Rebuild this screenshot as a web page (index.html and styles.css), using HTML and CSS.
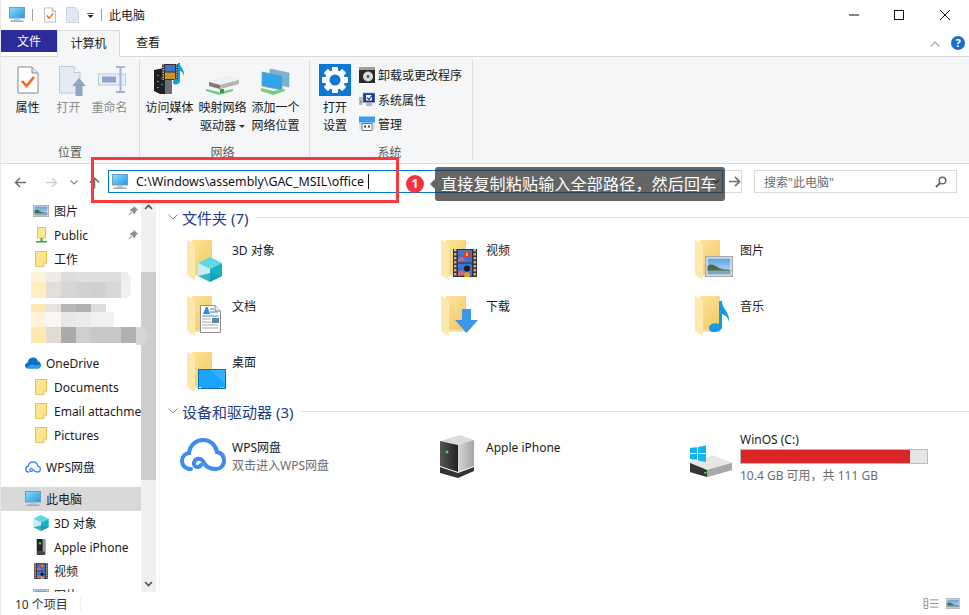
FILE: index.html
```html
<!DOCTYPE html>
<html>
<head>
	<title>此电脑</title>
	<meta charset="utf-8">
	<link rel="stylesheet" href="styles.css">
</head>
<body>
<svg class="defs" xmlns="http://www.w3.org/2000/svg">
	<defs>
		<linearGradient id="screen" x1="0" y1="0" x2="1" y2="1"><stop offset="0" stop-color="#8fe0fb"/><stop offset="1" stop-color="#1d97e2"/></linearGradient>
		<linearGradient id="fold" x1="0" y1="0" x2="0.7" y2="1"><stop offset="0" stop-color="#fbe39a"/><stop offset="1" stop-color="#f5cb68"/></linearGradient>
		<linearGradient id="sky" x1="0" y1="0" x2="0" y2="1"><stop offset="0" stop-color="#5d9fe0"/><stop offset="1" stop-color="#cfe4ef"/></linearGradient>
		<linearGradient id="towerL" x1="0" y1="0" x2="1" y2="0"><stop offset="0" stop-color="#555"/><stop offset="1" stop-color="#222"/></linearGradient>
		<linearGradient id="towerR" x1="0" y1="0" x2="1" y2="0"><stop offset="0" stop-color="#d5d5d5"/><stop offset="1" stop-color="#a5a5a5"/></linearGradient>

		<symbol id="i-pc" viewBox="0 0 16 16">
			<rect x="0.5" y="0.5" width="15" height="10.5" fill="url(#screen)" stroke="#6f9dbd"/>
			<rect x="5" y="11.5" width="6" height="2" fill="#b9c6d2"/>
			<rect x="1.5" y="13.5" width="13" height="1.4" fill="#8ea5b8"/>
		</symbol>
		<symbol id="i-prop" viewBox="0 0 22 28">
			<path d="M1 1H15L21 7V27H1Z" fill="#fff" stroke="#8a8a8a"/>
			<path d="M15 1V7H21" fill="#e6e6e6" stroke="#8a8a8a"/>
			<path d="M5 15L9.5 20L17 11" fill="none" stroke="#f1641e" stroke-width="2.6"/>
		</symbol>
		<symbol id="i-blank" viewBox="0 0 13 16">
			<path d="M0.5 0.5H9L12.5 4V15.5H0.5Z" fill="#dfe7f3" stroke="#c9d5e6"/>
		</symbol>
		<symbol id="i-open" viewBox="0 0 27 30">
			<path d="M0.5 0.5H15L21 6.5V27H0.5Z" fill="#e3ebf6" stroke="#bccbdd"/>
			<path d="M15 0.5V6.5H21" fill="#f2f5fa" stroke="#bccbdd"/>
			<path d="M20 12L27 20H23.5V30H16.5V20H13Z" fill="#8ea6c2"/>
		</symbol>
		<symbol id="i-rename" viewBox="0 0 28 27">
			<rect x="0.5" y="8" width="27" height="11" fill="#e9eff7" stroke="#bccbdd"/>
			<rect x="4" y="10.5" width="14" height="6" fill="#8fa7c6"/>
			<path d="M18 1H27M22.5 1V26M18 26H27" fill="none" stroke="#a3b6cc" stroke-width="2"/>
		</symbol>
		<symbol id="i-media" viewBox="0 0 31 31">
			<path d="M0 7L10 5L18 8V31H6L0 28Z" fill="#1f1f1f"/>
			<path d="M11 9L18 8V31H11Z" fill="#6f6f6f"/>
			<path d="M3 12h2v1H3zM7 15h2v1H7zM3 18h2v1H3zM7 21h2v1H7zM3 24h2v1H3z" fill="#2a9df4"/>
			<rect x="8" y="1" width="16" height="16" fill="#333"/>
			<path d="M9.2 1V17M22.800 1V17" stroke="#c2b58f" stroke-width="1.400" stroke-dasharray="1.500 1"/>
			<rect x="11" y="2" width="10" height="6.500" fill="#3e72c8"/>
			<rect x="11" y="9.500" width="10" height="6.500" fill="#c8952a"/>
			<path d="M24 0H26C26 5 31 6 30 13C29 9 27 8 26 8V18C26 22 19 23 19 19C19 16 22 15 24 16Z" fill="#159ae6"/>
		</symbol>
		<symbol id="i-drive" viewBox="0 0 33 21">
			<path d="M3 8L21 2L33 6V10L14 15L3 12Z" fill="#dcdcdc"/>
			<path d="M3 8L14 11L33 6L21 2Z" fill="#f0f0f0"/>
			<path d="M14 11L33 6V10L14 15Z" fill="#b5b5b5"/>
			<path d="M3 8L14 11V15L3 12Z" fill="#7c7c7c"/>
			<path d="M0 15L13 18L27 15V17L13 21L0 17Z" fill="#7bcb7b"/>
			<rect x="14" y="15" width="4" height="4" fill="#2f9d3f"/>
		</symbol>
		<symbol id="i-net" viewBox="0 0 29 26">
			<path d="M9 0L28 4V18L9 14Z" fill="#78b4d6" stroke="#8a9ba8" stroke-width="0.6"/>
			<path d="M1 3L21 7V21L1 17Z" fill="#2ea5ea" stroke="#8a9ba8" stroke-width="0.8"/>
			<path d="M0 19L12 22L24 20V22L12 26L0 22Z" fill="#7bcb7b"/>
		</symbol>
		<symbol id="i-gear" viewBox="0 0 32 32">
			<rect width="32" height="32" fill="#0f78d4"/>
			<g fill="#fff">
				<rect x="13" y="3" width="6" height="26" rx="1"/>
				<rect x="13" y="3" width="6" height="26" rx="1" transform="rotate(45 16 16)"/>
				<rect x="13" y="3" width="6" height="26" rx="1" transform="rotate(90 16 16)"/>
				<rect x="13" y="3" width="6" height="26" rx="1" transform="rotate(135 16 16)"/>
				<circle cx="16" cy="16" r="10"/>
			</g>
			<circle cx="16" cy="16" r="5.5" fill="#0f78d4"/>
		</symbol>
		<symbol id="i-uninstall" viewBox="0 0 16 16">
			<rect y="0" width="16" height="4" fill="#9aa87a"/>
			<rect y="3" width="16" height="13" fill="#2a2a2a"/>
			<circle cx="9" cy="9.5" r="5" fill="#d8d8d8"/>
			<circle cx="9" cy="9.5" r="1.4" fill="#555"/>
		</symbol>
		<symbol id="i-sys" viewBox="0 0 16 14">
			<rect x="0" y="4" width="3.5" height="8" fill="#b9b9b9"/>
			<rect x="1" y="8" width="1.5" height="1.5" fill="#3fae49"/>
			<rect x="4" y="0" width="12" height="9.5" fill="#1632a8" stroke="#9aa5b5" stroke-width="0.8"/>
			<rect x="7" y="2" width="6" height="5.5" fill="#fff"/>
			<path d="M8 4.5L10 6.5L13 2.5" fill="none" stroke="#1632a8" stroke-width="1.2"/>
			<rect x="7" y="10" width="6" height="3" fill="#b9b9b9"/>
		</symbol>
		<symbol id="i-manage" viewBox="0 0 16 15">
			<rect y="0" width="16" height="7" fill="#3a9be8"/>
			<rect x="0" y="6" width="16" height="7" fill="#cfe6f7"/>
			<path d="M3 14V7H13V14Z" fill="#fff" stroke="#555" stroke-width="0.8"/>
			<rect x="5" y="9" width="2" height="2" fill="#444"/>
			<rect x="9" y="9" width="2" height="2" fill="#444"/>
		</symbol>

		<symbol id="i-fold-sm" viewBox="0 0 12 16">
			<path d="M0.5 0.5H11.5V12L8.5 15.5H0.5Z" fill="#fde58f" stroke="#e8c24c"/>
			<path d="M8.5 15.5V12H11.5" fill="#fff" stroke="#e8c24c"/>
		</symbol>
		<symbol id="i-fold-pub" viewBox="0 0 12 16">
			<path d="M2.5 0.5H10.5V11H2.5Z" fill="#fde58f" stroke="#e8c24c"/>
			<rect x="5.5" y="11" width="2" height="3" fill="#3aa83a"/>
			<rect x="1" y="14" width="11" height="1.6" fill="#3aa83a"/>
		</symbol>
		<symbol id="i-pin" viewBox="0 0 10 10">
			<path d="M6 0L10 4L8.6 4.6L6.8 7.4L6.6 8.6L1.6 3.4L2.8 3.2L5.4 1.4ZM3 6L0 10L4 7Z" fill="#8a8f96"/>
		</symbol>
		<symbol id="i-folder" viewBox="0 0 48 48">
			<rect x="11" y="3" width="20" height="34" fill="url(#fold)"/>
			<path d="M6 3L14 7V43L6 38Z" fill="#fde9ad"/>
			<path d="M14 37H31V39H14Z" fill="#f1e1b8"/>
		</symbol>
		<symbol id="i-cube" viewBox="0 0 24 25">
			<path d="M12 0L24 6L12 12L0 6Z" fill="#5dd8e4"/>
			<path d="M0 6L12 12V25L0 19Z" fill="#c6eff2"/>
			<path d="M24 6L12 12V25L24 19Z" fill="#16b2c8"/>
			<path d="M0 19L12 16L24 19L12 25Z" fill="#0f9cb4" opacity="0.75"/>
		</symbol>
		<symbol id="i-film" viewBox="0 0 24 28">
			<rect width="24" height="28" fill="#333"/>
			<path d="M2.2 0V28M21.8 0V28" stroke="#c2b58f" stroke-width="2.4" stroke-dasharray="2.4 1.6"/>
			<rect x="5" y="1" width="14" height="12.5" fill="#3e73d6"/>
			<rect x="5" y="14.5" width="14" height="12.5" fill="#3e73d6"/>
			<path d="M5 10L9 8L13 11L5 13ZM5 23L9 21L13 25L5 27Z" fill="#d3647f"/>
			<circle cx="14" cy="5.5" r="3.6" fill="#e13c2d"/>
			<rect x="13" y="4" width="2" height="3" fill="#f5c21c"/>
			<circle cx="14" cy="19.5" r="3" fill="#1b1b1b"/>
			<circle cx="14" cy="26" r="3" fill="#e0a41c"/>
		</symbol>
		<symbol id="i-doc" viewBox="0 0 21 28">
			<path d="M0.5 0.5H15L20.5 6V27.5H0.5Z" fill="#fff" stroke="#8c8c8c"/>
			<path d="M15 0.5V6H20.5" fill="#e8e8e8" stroke="#8c8c8c"/>
			<path d="M3 9L6 2H7.5L10 9Z" fill="#2a8ad6"/>
			<path d="M10 4H14M10 7H18M2 11H18" stroke="#2a8ad6" stroke-width="1"/>
			<path d="M2 14H11M2 17H11M2 20H18M2 23H18" stroke="#a8a8a8" stroke-width="1"/>
			<rect x="12" y="13" width="7" height="5" fill="#5e8a96"/>
		</symbol>
		<symbol id="i-desk" viewBox="0 0 28 20">
			<rect x="0.5" y="0.5" width="27" height="19" fill="#19a4ff" stroke="#0a6eb4"/>
			<path d="M12 1H27V14Z" fill="#49b8ff" opacity="0.6"/>
			<path d="M1 18.5H3M22 18.5H23M24.5 18.5H25.5" stroke="#fff"/>
		</symbol>
		<symbol id="i-down" viewBox="0 0 23 24">
			<path d="M7 0H16V11H23L11.5 24L0 11H7Z" fill="#3a96e6"/>
		</symbol>
		<symbol id="i-pic" viewBox="0 0 28 21">
			<rect x="0.75" y="0.75" width="26.5" height="19.5" fill="#fff" stroke="#a8a8a8" stroke-width="1.5"/>
			<rect x="2.5" y="2.5" width="23" height="16" fill="url(#sky)"/>
			<path d="M2.5 10C6 7 9 9 14 12C18 14 22 13 25.5 14V15H2.5Z" fill="#486b52"/>
			<rect x="2.5" y="14.5" width="23" height="4" fill="#7ea8b8"/>
		</symbol>
		<symbol id="i-note" viewBox="0 0 22 32">
			<path d="M11 0H14C14 8 22 11 21 21C20 16 17 14 14 13V26C14 31 1 34 1 27C1 23 7 21 11 23Z" fill="#159ae6"/>
		</symbol>
		<symbol id="i-cloud" viewBox="0 0 46 33">
			<path d="M11 31C5 31 2 27 2 23C2 18 6 15 9 15C10 7 16 2 23 2C31 2 36 8 37 14C42 15 44 19 44 23C44 28 40 31 36 31C29 31 26 29 24 25C23 22 20 20 17 21C14 22 13 26 15 28C17 30 20 29 21 27" fill="none" stroke="#3d8cf0" stroke-width="4" stroke-linecap="round"/>
		</symbol>
		<symbol id="i-cloud-blue" viewBox="0 0 16 11">
			<path d="M3 11C1 11 0 9.5 0 8C0 6.5 1 5.4 2.4 5.4C3 2.200 5.200 0 8.200 0C10.500 0 12.300 1.600 12.800 3.800C14.600 4.100 16 5.600 16 7.600C16 9.600 14.500 11 12.800 11Z" fill="#0f6fc6"/>
			<path d="M2 10.500C5 5.500 8 7 10 8L16 7C15.800 9.800 14 11 12.800 11H3Z" fill="#2f9bea"/>
		</symbol>
		<symbol id="i-phone" viewBox="0 0 34 43">
			<path d="M0 6L20 0L34 5L18 10Z" fill="#dcdcdc"/>
			<path d="M0 6L18 10V37L0 31Z" fill="url(#towerL)"/>
			<path d="M18 10L34 5V31L18 37Z" fill="url(#towerR)"/>
			<path d="M0 32L18 38L34 32V36L18 43L0 38Z" fill="#333"/>
			<circle cx="7" cy="17" r="1.500" fill="#3fe04a"/>
		</symbol>
		<symbol id="i-phone-sm" viewBox="0 0 8 15">
			<rect x="0" y="0" width="8" height="12" fill="#222"/>
			<rect x="5.500" y="0" width="2.500" height="12" fill="#999"/>
			<rect x="0" y="12" width="8" height="3" fill="#444"/>
			<rect x="2" y="3" width="2" height="2" fill="#3fe04a"/>
		</symbol>
		<symbol id="i-win" viewBox="0 0 44 33">
			<path d="M0 18L23 11L42 18V25L17 32L0 27Z" fill="#bbb"/>
			<path d="M0 18L23 11L42 18L17 25Z" fill="#e6e6e6"/>
			<path d="M17 25L42 18V25L17 32Z" fill="#a8a8a8"/>
			<path d="M0 18L17 25V32L0 27Z" fill="#343434"/>
			<rect x="14" y="27" width="2.500" height="1.500" fill="#3fe04a"/>
			<path d="M0 3L7 2V8H0ZM8 2L16 0.500V8H8ZM0 9H7V15L0 14ZM8 9H16V17L8 15.500Z" fill="#12b5ef"/>
		</symbol>
	</defs>
</svg>

<div class="window">
	<!-- title bar -->
	<div class="titlebar">
		<svg class="qat-pc"><use href="#i-pc"/></svg>
		<span class="qat-sep"></span>
		<svg class="qat-doc"><use href="#i-prop"/></svg>
		<svg class="qat-doc2"><use href="#i-blank"/></svg>
		<svg class="qat-drop" viewBox="0 0 8 6"><path d="M0 0H8V1H0ZM0.500 2.500H7.500L4 6Z" fill="#222"/></svg>
		<span class="qat-sep"></span>
		<span class="title">此电脑</span>
		<div class="winbtns">
			<svg viewBox="0 0 10 10"><path d="M0 5H10" stroke="#111"/></svg>
			<svg viewBox="0 0 10 10"><rect x="0.500" y="0.500" width="9" height="9" fill="none" stroke="#111"/></svg>
			<svg viewBox="0 0 10 10"><path d="M0 0L10 10M10 0L0 10" stroke="#111"/></svg>
		</div>
	</div>

	<!-- tabs -->
	<div class="tabs">
		<span class="tab tab-file">文件</span>
		<span class="tab tab-on">计算机</span>
		<span class="tab">查看</span>
		<svg class="collapse" viewBox="0 0 10 6"><path d="M0.500 5.500L5 1L9.500 5.500" fill="none" stroke="#a8a8a8" stroke-width="1.200"/></svg>
		<span class="help">?</span>
	</div>

	<!-- ribbon -->
	<div class="ribbon">
		<div class="group group-loc">
			<div class="group-items">
				<div class="rbtn"><div class="rb-icon"><svg class="s-prop"><use href="#i-prop"/></svg></div><span>属性</span></div>
				<div class="rbtn off"><div class="rb-icon"><svg class="s-open"><use href="#i-open"/></svg></div><span>打开</span></div>
				<div class="rbtn off"><div class="rb-icon"><svg class="s-rename"><use href="#i-rename"/></svg></div><span>重命名</span></div>
			</div>
			<div class="group-name">位置</div>
		</div>
		<div class="group group-net">
			<div class="group-items">
				<div class="rbtn wide"><div class="rb-icon"><svg class="s-media"><use href="#i-media"/></svg></div><span>访问媒体</span><i class="tri"></i></div>
				<div class="rbtn wide"><div class="rb-icon"><svg class="s-drive"><use href="#i-drive"/></svg></div><span>映射网络</span><span>驱动器 <i class="tri tri-in"></i></span></div>
				<div class="rbtn wide"><div class="rb-icon"><svg class="s-net"><use href="#i-net"/></svg></div><span>添加一个</span><span>网络位置</span></div>
			</div>
			<div class="group-name">网络</div>
		</div>
		<div class="group group-sys">
			<div class="group-items">
				<div class="rbtn narrow"><div class="rb-icon"><svg class="s-gear"><use href="#i-gear"/></svg></div><span>打开</span><span>设置</span></div>
				<div class="small-list">
					<div class="small"><svg><use href="#i-uninstall"/></svg>卸载或更改程序</div>
					<div class="small"><svg><use href="#i-sys"/></svg>系统属性</div>
					<div class="small"><svg><use href="#i-manage"/></svg>管理</div>
				</div>
			</div>
			<div class="group-name">系统</div>
		</div>
	</div>

	<!-- address bar -->
	<div class="navbar">
		<svg class="nav-ic" viewBox="0 0 14 12"><path d="M13 6H2M6.500 1L1.500 6L6.500 11" fill="none" stroke="#6d6d6d" stroke-width="1.600"/></svg>
		<svg class="nav-ic nav-fwd" viewBox="0 0 14 12"><path d="M1 6H12M7.500 1L12.500 6L7.500 11" fill="none" stroke="#d0d0d0" stroke-width="1.600"/></svg>
		<svg class="nav-drop" viewBox="0 0 8 5"><path d="M0.500 0.500L4 4L7.500 0.500" fill="none" stroke="#8a8a8a" stroke-width="1.200"/></svg>
		<svg class="nav-up" viewBox="0 0 12 13"><path d="M6 13V2M1 6.500L6 1.500L11 6.500" fill="none" stroke="#6d6d6d" stroke-width="1.600"/></svg>
		<div class="addr">
			<div class="addr-input">
				<svg><use href="#i-pc"/></svg>
				<span class="addr-text">C:\Windows\assembly\GAC_MSIL\office</span>
				<span class="caret"></span>
				<svg class="addr-drop" viewBox="0 0 8 5"><path d="M0.500 0.500L4 4L7.500 0.500" fill="none" stroke="#333" stroke-width="1.200"/></svg>
			</div>
			<svg class="addr-go" viewBox="0 0 14 12"><path d="M1 6H12M7.500 1L12.500 6L7.500 11" fill="none" stroke="#6d6d6d" stroke-width="1.700"/></svg>
		</div>
		<div class="search">
			<span>搜索"此电脑"</span>
			<svg viewBox="0 0 12 12"><circle cx="7.500" cy="4.500" r="3.300" fill="none" stroke="#666" stroke-width="1.500"/><path d="M5 7L1 11" stroke="#666" stroke-width="2"/></svg>
		</div>
	</div>

	<div class="main">
		<!-- left tree -->
		<div class="side">
			<div class="tree">
				<div class="row sub"><svg class="ic"><use href="#i-pic"/></svg><span>图片</span><svg class="pin"><use href="#i-pin"/></svg></div>
				<div class="row sub"><svg class="ic"><use href="#i-fold-pub"/></svg><span>Public</span><svg class="pin"><use href="#i-pin"/></svg></div>
				<div class="row sub"><svg class="ic"><use href="#i-fold-sm"/></svg><span>工作</span></div>
				<div class="row"></div>
				<div class="row"></div>
				<div class="row"></div>
				<div class="row top gap"><svg class="ic"><use href="#i-cloud-blue"/></svg><span>OneDrive</span></div>
				<div class="row sub"><svg class="ic"><use href="#i-fold-sm"/></svg><span>Documents</span></div>
				<div class="row sub"><svg class="ic"><use href="#i-fold-sm"/></svg><span>Email attachments</span></div>
				<div class="row sub"><svg class="ic"><use href="#i-fold-sm"/></svg><span>Pictures</span></div>
				<div class="row top gap"><svg class="ic"><use href="#i-cloud"/></svg><span>WPS网盘</span></div>
				<div class="row top gap sel"><svg class="ic"><use href="#i-pc"/></svg><span>此电脑</span></div>
				<div class="row sub"><svg class="ic"><use href="#i-cube"/></svg><span>3D 对象</span></div>
				<div class="row sub"><svg class="ic"><use href="#i-phone-sm"/></svg><span>Apple iPhone</span></div>
				<div class="row sub"><svg class="ic"><use href="#i-film"/></svg><span>视频</span></div>
				<div class="row sub"><svg class="ic"><use href="#i-pic"/></svg><span>图片</span></div>
			</div>
			<div class="scroll">
				<svg class="sc-arrow" viewBox="0 0 9 6"><path d="M1 5L4.500 1.500L8 5" fill="none" stroke="#555" stroke-width="1.700"/></svg>
				<div class="sc-thumb"></div>
				<svg class="sc-arrow sc-end" viewBox="0 0 9 6"><path d="M1 1L4.500 4.500L8 1" fill="none" stroke="#555" stroke-width="1.700"/></svg>
			</div>
		</div>

		<!-- content -->
		<div class="content">
			<div class="sec-head">
				<svg viewBox="0 0 10 6"><path d="M0.500 0.500L5 5L9.500 0.500" fill="none" stroke="#8a8a8a"/></svg>
				<span>文件夹 (7)</span><i></i>
			</div>
			<div class="grid">
				<div class="item"><div class="big"><svg><use href="#i-folder"/></svg><svg class="ov ov-cube"><use href="#i-cube"/></svg></div><div class="name">3D 对象</div></div>
				<div class="item"><div class="big"><svg><use href="#i-folder"/></svg><svg class="ov ov-film"><use href="#i-film"/></svg></div><div class="name">视频</div></div>
				<div class="item"><div class="big"><svg><use href="#i-folder"/></svg><svg class="ov ov-pic"><use href="#i-pic"/></svg></div><div class="name">图片</div></div>
				<div class="item"><div class="big"><svg><use href="#i-folder"/></svg><svg class="ov ov-doc"><use href="#i-doc"/></svg></div><div class="name">文档</div></div>
				<div class="item"><div class="big"><svg><use href="#i-folder"/></svg><svg class="ov ov-down"><use href="#i-down"/></svg></div><div class="name">下载</div></div>
				<div class="item"><div class="big"><svg><use href="#i-folder"/></svg><svg class="ov ov-note"><use href="#i-note"/></svg></div><div class="name">音乐</div></div>
				<div class="item"><div class="big"><svg><use href="#i-folder"/></svg><svg class="ov ov-desk"><use href="#i-desk"/></svg></div><div class="name">桌面</div></div>
			</div>

			<div class="sec-head sec-two">
				<svg viewBox="0 0 10 6"><path d="M0.500 0.500L5 5L9.500 0.500" fill="none" stroke="#8a8a8a"/></svg>
				<span>设备和驱动器 (3)</span><i></i>
			</div>
			<div class="devices">
				<div class="dev">
					<svg class="dev-cloud"><use href="#i-cloud"/></svg>
					<div class="dev-txt"><div>WPS网盘</div><div class="muted">双击进入WPS网盘</div></div>
				</div>
				<div class="dev">
					<svg class="dev-phone"><use href="#i-phone"/></svg>
					<div class="dev-txt"><div>Apple iPhone</div></div>
				</div>
				<div class="dev">
					<svg class="dev-win"><use href="#i-win"/></svg>
					<div class="dev-txt dev-disk">
						<div>WinOS (C:)</div>
						<div class="bar"><div class="bar-fill" style="width:91%"></div></div>
						<div class="muted">10.4 GB 可用，共 111 GB</div>
					</div>
				</div>
			</div>
		</div>
	</div>

	<!-- status bar -->
	<div class="status">
		<span>10 个项目</span><i></i>
		<div class="views">
			<svg class="view-list" viewBox="0 0 16 12"><path d="M0.500 0.500H4.500V11.500H0.500ZM0.500 4H4.500M0.500 8H4.500" fill="none" stroke="#8a8a8a"/><path d="M7 2H16M7 6H16M7 10H16" stroke="#8a8a8a"/></svg>
			<svg class="view-pic"><use href="#i-pic"/></svg>
		</div>
	</div>

	<!-- mosaic over the hidden rows -->
	<svg class="mosaic" viewBox="0 0 118 74">
		<path d="M0 0H15V10H0Z" fill="#fdf3d8"/><path d="M15 0H30V10H15Z" fill="#ecebe8"/><path d="M30 0H45V10H30Z" fill="#dcdcdc"/><path d="M45 0H90V10H45Z" fill="#dedede"/><path d="M90 0H96L100 5V10H90Z" fill="#eeeef0"/>
		<path d="M0 10H15V26H0Z" fill="#fdeec0"/><path d="M15 10H30V26H15Z" fill="#e2dfd8"/><path d="M30 10H45V26H30Z" fill="#d6d6d6"/><path d="M45 10H60V26H45Z" fill="#d2d2d2"/><path d="M60 10H75V26H60Z" fill="#d0d0d4"/><path d="M75 10H90V26H75Z" fill="#d8d8d8"/><path d="M90 10H100V22L96 26H90Z" fill="#f0f0f2"/>
		<path d="M0 32H15V40H0Z" fill="#fde9b0"/><path d="M15 32H30V40H15Z" fill="#e6e3dc"/><path d="M30 32H45V40H30Z" fill="#b8b8ba"/><path d="M45 32H60V40H45Z" fill="#b0b0b4"/><path d="M60 32H75V40H60Z" fill="#dcdcdc"/>
		<path d="M0 40H15V55H0Z" fill="#fef3d5"/><path d="M15 40H30V55H15Z" fill="#f8f7f4"/><path d="M30 40H45V55H30Z" fill="#e8e8e8"/><path d="M45 40H60V55H45Z" fill="#ebebeb"/><path d="M60 40H83V55H60Z" fill="#f1f1f1"/>
		<path d="M0 55H15V71H0Z" fill="#fde8b0"/><path d="M15 55H30V71H15Z" fill="#e0dccf"/><path d="M30 55H45V71H30Z" fill="#aaaaaa"/><path d="M45 55H60V71H45Z" fill="#cfcfcf"/><path d="M60 55H90V71H60Z" fill="#c8c8c8"/><path d="M90 55H105V71H90Z" fill="#b0b0b2"/><path d="M105 55H113L117 60V68L113 73H105Z" fill="#d5d5d5"/>
	</svg>

	<!-- annotation -->
	<div class="redbox"></div>
	<div class="badge">1</div>
	<div class="callout">直接复制粘贴输入全部路径，然后回车</div>
</div>
</body>
</html>
```

FILE: styles.css
```css
html, body {
    margin: 0;
    padding: 0;
    background: #fff;
}

body {
    font-family: "Noto Sans", "Noto Sans CJK SC", sans-serif;
    font-size: 12px;
    color: #1a1a1a;
}

.defs {
    display: block;
    width: 0;
    height: 0;
    overflow: hidden;
}

svg {
    display: block;
    flex: none;
}

i {
    font-style: normal;
}

.window {
    position: relative;
    width: 969px;
    height: 615px;
    overflow: hidden;
    display: flex;
    flex-direction: column;
    box-sizing: border-box;
    border-left: 1px solid #e8e8e8;
}

/* title bar */
.titlebar {
    height: 30px;
    display: flex;
    align-items: center;
    padding-left: 8px;
}

.qat-pc {
    width: 16px;
    height: 16px;
}

.qat-sep {
    width: 1px;
    height: 12px;
    background: #a0a0a0;
    margin: 0 7px 0 7px;
}

.qat-doc {
    width: 12px;
    height: 16px;
    margin-left: 4px;
}

.qat-doc2 {
    width: 13px;
    height: 16px;
    margin-left: 10px;
}

.qat-drop {
    width: 7px;
    height: 5px;
    margin-left: 8px;
}

.title {
    margin-left: 0;
    font-size: 12px;
}

.winbtns {
    margin-left: auto;
    display: flex;
    gap: 35px;
    padding-right: 19px;
}

.winbtns svg {
    width: 10px;
    height: 10px;
}

.winbtns svg:last-child {
    margin-left: 1px;
}

/* tabs */
.tabs {
    height: 27px;
    display: flex;
    align-items: flex-start;
    border-bottom: 1px solid #dadbdc;
    box-sizing: border-box;
}

.tab {
    height: 26px;
    line-height: 25px;
    width: 56px;
    text-align: center;
    box-sizing: border-box;
}

.tab-file {
    height: 22px;
    line-height: 24px;
    background: #2b2b9a;
    color: #fff;
}

.tab-on {
    width: 63px;
    height: 27px;
    background: #f5f6f7;
    border: 1px solid #dadbdc;
    border-bottom: none;
}

.collapse {
    width: 10px;
    height: 6px;
    margin: 11px 0 0 auto;
}

.help {
    width: 14px;
    height: 14px;
    border-radius: 50%;
    background: #1a6fcc;
    color: #fff;
    font-size: 11px;
    font-weight: 700;
    line-height: 14px;
    text-align: center;
    margin: 6px 4px 0 11px;
}

/* ribbon */
.ribbon {
    height: 107px;
    background: #f5f6f7;
    border-bottom: 1px solid #dadbdc;
    box-sizing: border-box;
    display: flex;
}

.group {
    display: flex;
    flex-direction: column;
    margin-top: 3px;
    margin-bottom: 3px;
    border-right: 1px solid #dcdddf;
    box-sizing: border-box;
}

.group-loc { width: 139px; padding-left: 6px; }
.group-net { width: 170px; padding-left: 3px; }
.group-sys { width: 163px; padding-left: 7px; }

.group-items {
    flex: 1;
    display: flex;
}

.group-name {
    height: 17px;
    line-height: 19px;
    text-align: center;
    color: #5c5c5c;
    margin-left: -6px;
}

.group-net .group-name { margin-left: -7px; }
.group-sys .group-name { margin-left: -10px; }

.rbtn {
    width: 41px;
    display: flex;
    flex-direction: column;
    align-items: center;
    line-height: 17.5px;
    white-space: nowrap;
}

.rbtn.wide { width: 53px; }
.rbtn.narrow { width: 36px; }
.rbtn.off { color: #8d8d8d; }

.rb-icon {
    height: 36px;
    margin-bottom: 3px;
    display: flex;
    align-items: flex-end;
}

.s-prop { width: 22px; height: 28px; margin-bottom: 2px; }
.s-open { width: 27px; height: 30px; margin-left: 8px; }
.s-rename { width: 28px; height: 27px; margin-bottom: 3px; margin-left: 4px; }
.s-media { width: 31px; height: 31px; margin-bottom: 2px; }
.s-drive { width: 33px; height: 21px; margin-bottom: 1px; }
.s-net { width: 29px; height: 26px; margin-bottom: 1px; }
.s-gear { width: 32px; height: 32px; }

.tri {
    display: block;
    width: 0;
    height: 0;
    border-left: 3px solid transparent;
    border-right: 3px solid transparent;
    border-top: 3px solid #333;
    margin-top: 1px;
}

.tri-in {
    display: inline-block;
    vertical-align: middle;
    margin: 0;
}

.small-list {
    margin-left: 6px;
    padding-top: 6px;
    display: flex;
    flex-direction: column;
    gap: 6.5px;
}

.small {
    display: flex;
    align-items: center;
    gap: 3px;
    height: 18px;
    white-space: nowrap;
}

.small svg {
    width: 16px;
    height: 16px;
}

/* address bar */
.navbar {
    height: 35px;
    display: flex;
    align-items: flex-start;
    padding-top: 6px;
    box-sizing: border-box;
}

.nav-ic {
    width: 13px;
    height: 11px;
    margin: 7px 0 0 13px;
}

.nav-fwd {
    margin-left: 18px;
}

.nav-drop {
    width: 8px;
    height: 5px;
    margin: 10px 0 0 12px;
}

.nav-up {
    width: 11px;
    height: 13px;
    margin: 6px 0 0 11px;
}

.addr {
    margin-left: 8px;
    width: 634px;
    height: 23px;
    border: 1px solid #d9d9d9;
    box-sizing: border-box;
    display: flex;
    align-items: center;
}

.addr-input {
    width: 615px;
    height: 23px;
    margin: -1px 0 -1px -1px;
    border: 1px solid #0078d7;
    box-sizing: border-box;
    display: flex;
    align-items: center;
    padding-left: 2px;
}

.addr-input svg {
    width: 18px;
    height: 16px;
}

.addr-text {
    margin-left: 7px;
    white-space: nowrap;
    color: #111;
    font-size: 12.4px;
}

.caret {
    width: 1px;
    height: 15px;
    background: #111;
    margin-left: 4px;
}

.addr-input .addr-drop {
    width: 8px;
    height: 5px;
    margin-left: auto;
    margin-right: 2px;
}

.addr-go {
    width: 13px;
    height: 11px;
    margin-left: 5px;
}

.search {
    margin-left: 12px;
    width: 203px;
    height: 23px;
    border: 1px solid #d9d9d9;
    box-sizing: border-box;
    display: flex;
    align-items: center;
    justify-content: space-between;
    padding: 0 9px;
    color: #6d6d6d;
}

.search svg {
    width: 12px;
    height: 12px;
}

/* sidebar */
.main {
    flex: 1;
    min-height: 0;
    display: flex;
}

.side {
    width: 156px;
    display: flex;
    flex: none;
}

.tree {
    width: 140px;
    overflow: hidden;
    flex: none;
}

.row {
    height: 24px;
    display: flex;
    align-items: center;
    white-space: nowrap;
    overflow: hidden;
}

.row.sub { padding-left: 32px; }
.row.top { padding-left: 24px; }
.row.gap { margin-top: 8px; }
.row.sel { background: #d9d9d9; }

.ic {
    width: 16px;
    height: 16px;
    margin-right: 5px;
}

.pin {
    width: 10px;
    height: 10px;
    margin-left: auto;
    margin-right: 3px;
}

.scroll {
    width: 15px;
    background: #f0f0f0;
    position: relative;
    display: flex;
    flex-direction: column;
    align-items: center;
}

.sc-arrow {
    width: 9px;
    height: 6px;
    margin-top: 5px;
}

.sc-thumb {
    width: 100%;
    height: 208px;
    margin-top: 62px;
    background: #cdcdcd;
}

.sc-end {
    margin-top: auto;
    margin-bottom: 5px;
}

/* content */
.content {
    flex: 1;
    min-width: 0;
    padding-left: 8px;
    margin-left: 2px;
    border-left: 1px solid #f4f4f4;
}

.sec-head {
    height: 16px;
    margin-top: 10px;
    display: flex;
    align-items: center;
    color: #1e3a8c;
    font-size: 15px;
}

.sec-head svg {
    width: 10px;
    height: 6px;
    margin-right: 4px;
}

.sec-head i {
    flex: 1;
    height: 1px;
    background: #e2e2e2;
    margin-left: 8px;
}

.sec-two {
    margin-top: -2px;
}

.grid {
    display: grid;
    grid-template-columns: repeat(3, 254px);
    grid-auto-rows: 56px;
    margin: 12px 0 0 13px;
}

.item {
    display: flex;
}

.big {
    position: relative;
    width: 48px;
    height: 48px;
}

.big > svg {
    width: 48px;
    height: 48px;
}

.big > .ov { position: absolute; }
.big > .ov-cube { left: 17px; top: 20px; width: 24px; height: 25px; }
.big > .ov-film { left: 18px; top: 12px; width: 24px; height: 28px; }
.big > .ov-pic { left: 16px; top: 19px; width: 28px; height: 21px; }
.big > .ov-doc { left: 19px; top: 12px; width: 21px; height: 28px; }
.big > .ov-down { left: 20px; top: 16px; width: 23px; height: 24px; }
.big > .ov-note { left: 19px; top: 8px; width: 22px; height: 32px; }
.big > .ov-desk { left: 17px; top: 20px; width: 28px; height: 20px; }

.name {
    margin: 6px 0 0 3px;
    line-height: 16px;
}

.devices {
    display: grid;
    grid-template-columns: repeat(3, 254px);
    margin: 10px 0 0 12px;
}

.dev {
    display: flex;
    height: 60px;
}

.dev-txt {
    line-height: 18px;
    padding-top: 10px;
}

.muted {
    color: #6d6d6d;
}

.dev-cloud {
    width: 46px;
    height: 33px;
    margin: 9px 6px 0 0;
}

.dev-phone {
    width: 34px;
    height: 43px;
    margin: 6px 12px 0 6px;
}

.dev-win {
    width: 44px;
    height: 33px;
    margin: 16px 6px 0 2px;
}

.dev-disk {
    padding-top: 2px;
    width: 188px;
}

.bar {
    height: 15px;
    background: #e6e6e6;
    border: 1px solid #bcbcbc;
    box-sizing: border-box;
    margin: 0 0 3px;
}

.bar-fill {
    height: 100%;
    background: #da2626;
}

/* status bar */
.status {
    height: 23px;
    display: flex;
    align-items: center;
    padding-left: 14px;
    color: #333;
}

.status i {
    width: 1px;
    height: 14px;
    background: #efefef;
    margin-left: 12px;
}

.views {
    margin-left: auto;
    display: flex;
    align-items: center;
    gap: 7px;
    padding-right: 9px;
}

.view-list {
    width: 16px;
    height: 11px;
}

.view-pic {
    width: 14px;
    height: 11px;
}

/* things laid over the window */
.mosaic {
    position: absolute;
    left: 30px;
    top: 272px;
    width: 118px;
    height: 74px;
}

.redbox {
    position: absolute;
    left: 90px;
    top: 157px;
    width: 308px;
    height: 46px;
    border: 3px solid #f83a3f;
    box-sizing: border-box;
}

.badge {
    position: absolute;
    left: 405px;
    top: 175px;
    width: 18px;
    height: 18px;
    border-radius: 50%;
    background: #f5333f;
    color: #fff;
    font-weight: 700;
    font-size: 12px;
    line-height: 18px;
    text-align: center;
}

.callout {
    position: absolute;
    left: 434px;
    top: 167px;
    width: 290px;
    height: 34px;
    box-sizing: border-box;
    padding-left: 6px;
    background: rgba(50, 50, 50, 0.75);
    border-radius: 3px;
    color: #fff;
    font-size: 16px;
    line-height: 34px;
    letter-spacing: 0.2px;
    white-space: nowrap;
}

.callout::before {
    content: "";
    position: absolute;
    left: -5px;
    top: 12px;
    border-top: 5px solid transparent;
    border-bottom: 5px solid transparent;
    border-right: 5px solid rgba(50, 50, 50, 0.75);
}
```
